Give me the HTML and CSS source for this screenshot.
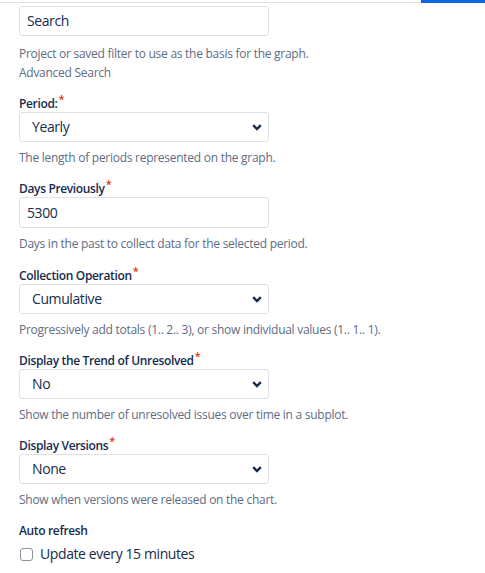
FILE: index.html
```html
<!DOCTYPE html>
<html lang="en">
<head>
<meta charset="utf-8">
<title>Chart settings</title>
<link rel="stylesheet" href="styles.css">
</head>
<body>
<div class="topbar"><div class="topbar-line"></div><div class="topbar-active"></div></div>
<form class="form">
  <div class="field field-first">
    <div class="text-input">Search</div>
    <p class="help help-first">Project or saved filter to use as the basis for the graph.</p>
    <a class="help-link">Advanced Search</a>
  </div>

  <div class="field">
    <label class="label">Period:<span class="req">*</span></label>
    <div class="select"><span>Yearly</span><svg class="chev" viewBox="0 0 10 7" width="10" height="7"><path d="M1.2 1.2 L5 5 L8.8 1.2" /></svg></div>
    <p class="help help-gap">The length of periods represented on the graph.</p>
  </div>

  <div class="field field-input">
    <label class="label">Days Previously<span class="req">*</span></label>
    <div class="text-input">5300</div>
    <p class="help help-gap">Days in the past to collect data for the selected period.</p>
  </div>

  <div class="field">
    <label class="label">Collection Operation<span class="req">*</span></label>
    <div class="select"><span>Cumulative</span><svg class="chev" viewBox="0 0 10 7" width="10" height="7"><path d="M1.2 1.2 L5 5 L8.8 1.2" /></svg></div>
    <p class="help help-gap">Progressively add totals (1.. 2.. 3), or show individual values (1.. 1.. 1).</p>
  </div>

  <div class="field">
    <label class="label">Display the Trend of Unresolved<span class="req">*</span></label>
    <div class="select"><span>No</span><svg class="chev" viewBox="0 0 10 7" width="10" height="7"><path d="M1.2 1.2 L5 5 L8.8 1.2" /></svg></div>
    <p class="help help-gap">Show the number of unresolved issues over time in a subplot.</p>
  </div>

  <div class="field">
    <label class="label">Display Versions<span class="req">*</span></label>
    <div class="select"><span>None</span><svg class="chev" viewBox="0 0 10 7" width="10" height="7"><path d="M1.2 1.2 L5 5 L8.8 1.2" /></svg></div>
    <p class="help help-gap">Show when versions were released on the chart.</p>
  </div>

  <div class="field">
    <label class="label">Auto refresh</label>
    <label class="check-row"><span class="checkbox"></span><span>Update every 15 minutes</span></label>
  </div>
</form>
</body>
</html>
```
FILE: styles.css
```css
html, body {
  margin: 0;
  padding: 0;
  background: #ffffff;
}
body {
  font-family: "Open Sans", "Noto Sans", "Liberation Sans", sans-serif;
  color: #172b4d;
  width: 485px;
  height: 573px;
  overflow: hidden;
}
.topbar {
  display: flex;
  height: 3px;
}
.topbar-line {
  flex: 1;
  border-bottom: 1px solid #dfe1e6;
  box-sizing: border-box;
}
.topbar-active {
  width: 64px;
  background: #0c66e4;
}
.form {
  margin: 0;
  padding: 3px 0 0 19px;
}
.field {
  margin-bottom: 15px;
}
.field-first {
  margin-bottom: 15px;
}
.field-input {
  margin-bottom: 16px;
}
.label {
  display: block;
  font-size: 12px;
  font-weight: 600;
  line-height: 16px;
  letter-spacing: -0.35px;
  color: #172b4d;
}
.req {
  color: #de350b;
  font-size: 11px;
  position: relative;
  top: -5px;
  margin-left: 1px;
}
.text-input {
  box-sizing: border-box;
  width: 250px;
  height: 30px;
  border: 1px solid #dfe1e6;
  border-radius: 3px;
  padding: 0 7px;
  font-size: 14px;
  line-height: 28px;
  letter-spacing: -0.4px;
  color: #172b4d;
}
.field-input .text-input {
  height: 31px;
  line-height: 29px;
}
.select {
  box-sizing: border-box;
  width: 250px;
  height: 30px;
  border: 1px solid #dfe1e6;
  border-radius: 3px;
  padding: 0 6px 0 12px;
  font-size: 14px;
  line-height: 28px;
  letter-spacing: -0.4px;
  color: #172b4d;
  display: flex;
  align-items: center;
  justify-content: space-between;
}
.chev {
  display: block;
}
.chev path {
  fill: none;
  stroke: #172b4d;
  stroke-width: 2.4;
}
.help {
  margin: 0;
  font-size: 12px;
  line-height: 16px;
  letter-spacing: -0.27px;
  color: #5e6c84;
}
.help-first {
  margin-top: 10px;
}
.help-gap {
  margin-top: 8px;
}
.help-link {
  display: block;
  margin-top: 3px;
  font-size: 12px;
  line-height: 16px;
  letter-spacing: -0.27px;
  color: #5e6c84;
}
.check-row {
  display: flex;
  align-items: center;
  gap: 7px;
  margin-top: 6px;
  font-size: 14px;
  line-height: 18px;
  letter-spacing: -0.4px;
  color: #172b4d;
}
.checkbox {
  box-sizing: border-box;
  width: 13px;
  height: 13px;
  border: 1px solid #8993a4;
  border-radius: 3px;
  margin-left: 1px;
}
```
